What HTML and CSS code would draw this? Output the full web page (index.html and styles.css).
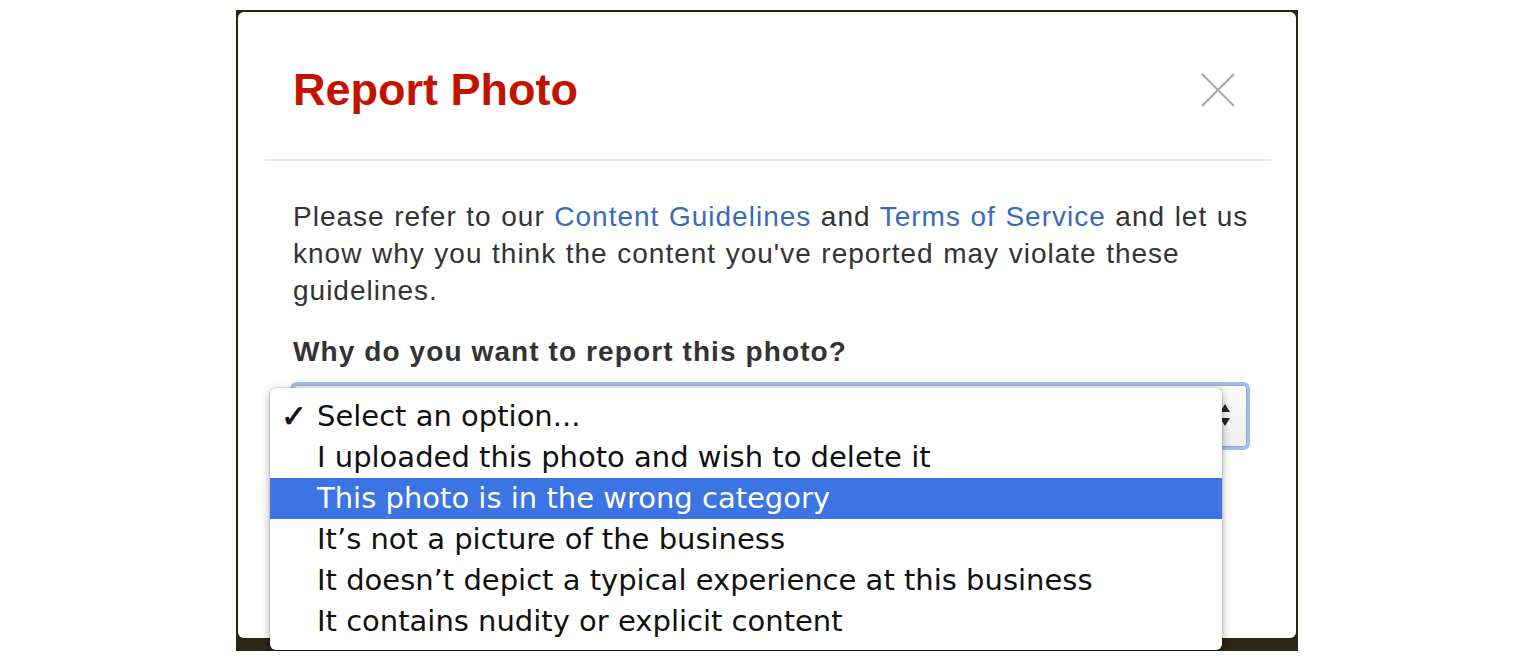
FILE: index.html
```html
<!DOCTYPE html>
<html>
<head>
<meta charset="utf-8">
<link rel="stylesheet" href="styles.css">
</head>
<body>
<div class="stage">
  <div class="modal">
    <div class="modal-header">
      <h1 class="title">Report Photo</h1>
      <span class="close" aria-label="Close">
        <svg width="34" height="34" viewBox="0 0 34 34"><path d="M1 1 L33 33 M33 1 L1 33" stroke="#a8a8a8" stroke-width="2" fill="none"/></svg>
      </span>
    </div>
    <div class="modal-body">
      <p class="intro">Please refer to our <a class="link">Content Guidelines</a> and <a class="link">Terms of Service</a> and let us know why you think the content you've reported may violate these guidelines.</p>
      <div class="question">Why do you want to report this photo?</div>
      <div class="select">
        <span class="arrows"><span class="up"></span><span class="down"></span></span>
      </div>
    </div>
  </div>
  <ul class="menu">
    <li class="item checked"><span class="check">✓</span>Select an option...</li>
    <li class="item">I uploaded this photo and wish to delete it</li>
    <li class="item active">This photo is in the wrong category</li>
    <li class="item">It’s not a picture of the business</li>
    <li class="item">It doesn’t depict a typical experience at this business</li>
    <li class="item">It contains nudity or explicit content</li>
  </ul>
</div>
</body>
</html>
```

FILE: styles.css
```css
html, body {
  margin: 0;
  padding: 0;
  background: #ffffff;
}
body {
  padding-top: 10px;
  font-family: "Liberation Sans", Arial, sans-serif;
}
.stage {
  position: relative;
  margin-left: 236px;
  width: 1062px;
  height: 641px;
  box-sizing: border-box;
  padding: 2px 2px 0 2px;
  background: #2b2614;
}
.modal {
  height: 626px;
  background: #ffffff;
  border-radius: 6px;
  overflow: hidden;
}
.modal-header {
  display: flex;
  align-items: center;
  justify-content: space-between;
  margin: 0 25px 0 27px;
  padding: 50px 0 41px 28px;
  border-bottom: 2px solid #e8e8e8;
}
.title {
  margin: 0;
  font-size: 45px;
  line-height: 56px;
  font-weight: bold;
  color: #c41200;
}
.close {
  display: flex;
  margin-right: 36px;
}
.modal-body {
  padding: 37px 0 0 55px;
}
.intro {
  margin: 0;
  width: 968px;
  font-size: 28px;
  line-height: 37px;
  letter-spacing: 1px;
  word-spacing: 0.8px;
  color: #333333;
}
.link {
  color: #3a6bb5;
  text-decoration: none;
}
.question {
  margin-top: 24px;
  font-size: 28px;
  line-height: 37px;
  letter-spacing: 1.1px;
  font-weight: bold;
  color: #333333;
}
.select {
  position: relative;
  margin-top: 15px;
  width: 952px;
  height: 60px;
  border: 1px solid #9aa8bb;
  border-radius: 4px;
  background: linear-gradient(#fbfbfb, #eeeeee);
  box-shadow: 0 0 0 3px rgba(120, 170, 230, 0.75);
}
.arrows {
  position: absolute;
  left: 926px;
  top: 18px;
  display: flex;
  flex-direction: column;
  gap: 6px;
}
.up {
  width: 0;
  height: 0;
  border-left: 5px solid transparent;
  border-right: 5px solid transparent;
  border-bottom: 8px solid #222;
}
.down {
  width: 0;
  height: 0;
  border-left: 5px solid transparent;
  border-right: 5px solid transparent;
  border-top: 8px solid #222;
}
.menu {
  position: absolute;
  left: 34px;
  top: 378px;
  width: 952px;
  margin: 0;
  padding: 8px 0 8px 0;
  list-style: none;
  background: #ffffff;
  border-radius: 6px;
  box-shadow: 0 3px 10px rgba(0, 0, 0, 0.35), 0 0 0 1px rgba(0, 0, 0, 0.08);
}
.item {
  position: relative;
  height: 41px;
  line-height: 41px;
  padding-left: 47px;
  font-family: "DejaVu Sans", "Liberation Sans", sans-serif;
  font-size: 29px;
  color: #111111;
}
.item.active {
  background: #3c74e4;
  color: #ffffff;
}
.check {
  position: absolute;
  left: 11px;
  top: 0;
  font-size: 31px;
  font-weight: bold;
  -webkit-text-stroke: 0.8px #111111;
}
```
